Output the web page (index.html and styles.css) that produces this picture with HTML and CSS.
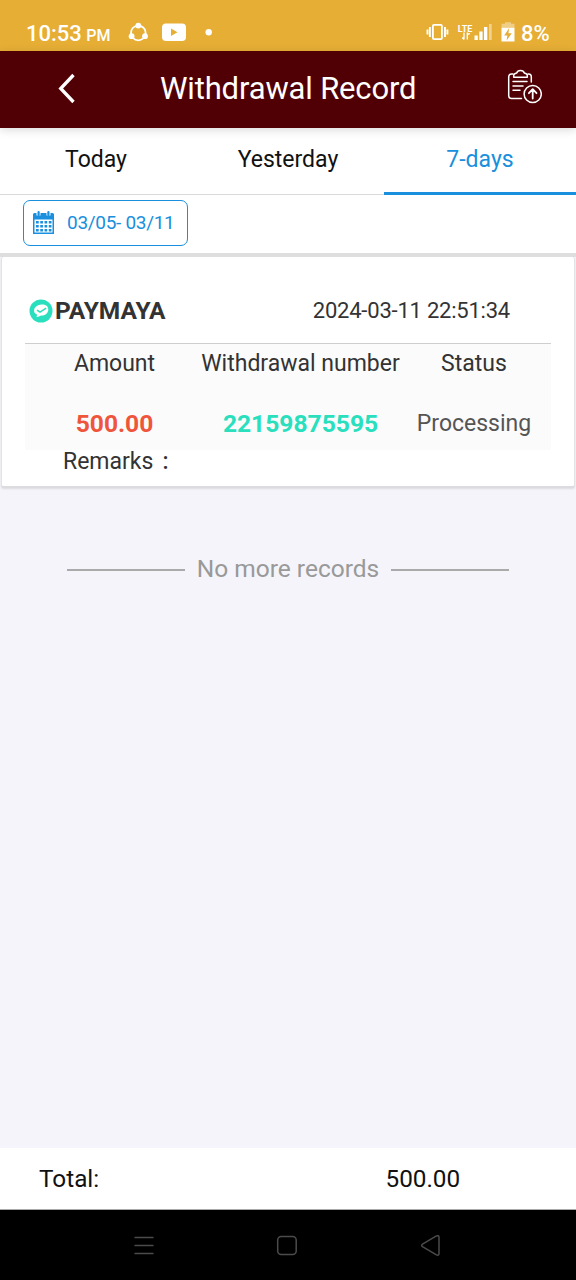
FILE: index.html
```html
<!DOCTYPE html>
<html lang="en">
<head>
<meta charset="utf-8">
<title>Withdrawal Record</title>
<link rel="stylesheet" href="styles.css">
</head>
<body>
<div class="screen">
  <div class="status">
    <span class="clock">10:53 <small>PM</small></span>
    <svg class="status-left" width="90" height="24" viewBox="128 21 90 24" fill="#fff">
      <circle cx="138.3" cy="33" r="7.3" fill="none" stroke="#fff" stroke-width="1.8" stroke-dasharray="11.3 4" stroke-dashoffset="-6"/>
      <circle cx="138.3" cy="25.6" r="2.9"/><circle cx="131.6" cy="36.2" r="2.9"/><circle cx="145" cy="36.2" r="2.9"/>
      <rect x="162" y="23.5" width="24" height="17.5" rx="4"/>
      <path d="M171 28.5v7.500l6.500-3.750z" fill="#e6ae35"/>
      <circle cx="208.700" cy="32.300" r="3.200"/>
    </svg>
    <svg class="status-right" width="92" height="26" viewBox="425 20 92 26" fill="#fff">
      <rect x="432.900" y="24.900" width="9" height="14.200" rx="1" fill="none" stroke="#fff" stroke-width="1.800"/>
      <path d="M429.900 27v10M427.500 29.500v5M445 27v10M447.400 29.500v5" fill="none" stroke="#fff" stroke-width="1.900"/>
      <text class="lte" x="457.800" y="31.500">LTE</text>
      <path d="M464 32.500v7m-1.700-2l1.700 2M467.300 39.500v-7m0 2.500q1-1.500 2.500-1.200" fill="none" stroke="#fff" stroke-width="1.300"/>
      <path d="M474.500 35.500h3.300v4.500h-3.300zM479.300 31.500h3.300v8.500h-3.300zM484 27h3.300v13H484z"/>
      <path d="M489 24h2.700v16H489z" opacity=".45"/>
      <path d="M501.500 27.500h13V41.500h-13z"/><path d="M501.500 27v-3.200h3.500v-1.500h6v1.500h3.500V27z" opacity=".4"/>
      <path d="M509.200 28l-5 7.500h3.200l-.8 5 5.200-7.200h-3.400z" fill="#e6ae35"/>
    </svg>
    <span class="battery">8%</span>
  </div>
  <header class="header">
    <svg class="back" width="24" height="34" viewBox="0 0 24 34" fill="none" stroke="#fff" stroke-width="3.300"><path d="M18.500 4L5.700 17.500 18.500 31"/></svg>
    <h1>Withdrawal Record</h1>
    <svg class="report" width="36" height="36" viewBox="506 69 36 36" fill="none" stroke="#fff" stroke-width="1.500" stroke-linecap="round" stroke-linejoin="round">
      <path d="M513 74h-1.500q-2.800 0-2.800 2.800v19q0 2.700 2.800 2.700h10M528 74h.700q2.600 0 2.600 2.800V82"/>
      <path d="M513.700 77.200v-2q0-1.500 3-2.200.700-2.500 3.800-2.500t3.800 2.500q3 .7 3 2.200v2zM513 81.500h14M513 86h10M513 90.300h7"/>
      <circle cx="532.700" cy="94" r="8.600"/><path d="M532.700 98.500v-9M528.900 93.200l3.800-4 3.800 4" stroke-width="1.800"/>
    </svg>
  </header>
  <nav class="tabs"><span>Today</span><span>Yesterday</span><span class="active">7-days</span></nav>
  <div class="filter">
    <button class="date">
      <svg width="22" height="24" viewBox="0 0 22 24" fill="#198fdd">
        <path fill-rule="evenodd" d="M1.500 2h2v2.500h4V2h6v2.500h4V2h2Q21 2 21 3.500V23H0V3.500Q0 2 1.500 2zM1.500 8.500v13h18v-13z"/>
        <rect x="4.500" y="0" width="2.200" height="5" rx="1"/><rect x="14.300" y="0" width="2.200" height="5" rx="1"/>
        <path d="M3 11.300h15.500M3 15.300h15.500M3 19.300h15.500" fill="none" stroke="#198fdd" stroke-width="2.500" stroke-dasharray="2.700 1.560"/>
      </svg>
      <span>03/05- 03/11</span>
    </button>
  </div>
  <main class="content">
    <article class="card">
      <div class="card-head">
        <svg width="24" height="24" viewBox="0 0 24 24"><circle cx="12" cy="12" r="11.500" fill="#29dfbd"/><path d="M12.500 5.500c4.300-.5 7.200 2 6.800 5.600-.4 3.500-3.200 5.500-6.800 5.500-1.300 0-2.500 1.200-5 1.500l.6-2.400C5.800 14.600 4.800 13 5.100 11c.5-3.200 3.600-5.200 7.400-5.500z" fill="#fff"/><path d="M8 11.200l3 2 6.200-4" fill="none" stroke="#29dfbd" stroke-width="1.500"/></svg>
        <strong>PAYMAYA</strong>
        <time>2024-03-11 22:51:34</time>
      </div>
      <div class="grid">
        <span>Amount</span><span>Withdrawal number</span><span>Status</span>
        <b class="amount">500.00</b><b class="number">22159875595</b><span class="state">Processing</span>
      </div>
      <div class="remarks">Remarks<span class="colon">:</span></div>
    </article>
    <div class="end"><i></i><span>No more records</span><i></i></div>
  </main>
  <footer class="total"><span>Total:</span><span class="sum">500.00</span></footer>
  <div class="system">
    <svg width="20" height="22" viewBox="0 0 20 22"><path d="M.5 2.500h19M.5 10.500h19M.5 18.500h19"/></svg>
    <svg width="22" height="22" viewBox="0 0 22 22"><rect x="1.700" y="1.500" width="18.500" height="18" rx="3.500"/></svg>
    <svg width="22" height="22" viewBox="0 0 22 22"><path d="M2.500 9.200L16 1.200q3-1.500 3 1.300v16q0 2.700-3 1.200l-13.500-8q-1.700-1.200 0-2.500z"/></svg>
  </div>
</div>
</body>
</html>
```
FILE: styles.css
```css
* { box-sizing: border-box; }
body { margin: 0; font-family: Roboto, "Liberation Sans", sans-serif; color: #111; background: #f4f4fa; }
svg { display: block; flex: none; }
.screen { width: 576px; height: 1280px; display: flex; flex-direction: column; overflow: hidden; }
.status { height: 51px; flex: none; background: #e6ae35; color: #fff; display: flex; align-items: flex-start; padding: 20px 0 0 26px; white-space: nowrap; }
.clock { width: 102px; font-size: 22px; line-height: 27px; font-weight: 500; }
.clock small { font-size: 16px; margin-left: -1px; }
.status-left { margin-top: 1px; }
.status-right { margin-left: 207px; }
.lte { font: 700 9px Roboto, sans-serif; }
.battery { font-size: 22px; line-height: 27px; font-weight: 500; margin-left: 4px; }
.header { height: 77px; flex: none; background: #500005; color: #fff; display: grid; grid-template-columns: 160px 256px 160px; align-items: center; box-shadow: 0 2px 9px rgba(0,0,0,.15); z-index: 1; }
.header h1 { margin: 0; padding-bottom: 1px; font-size: 31px; letter-spacing: -.16px; font-weight: 400; line-height: 36px; text-align: center; white-space: nowrap; }
.back { margin: -3px 0 0 55px; }
.report { margin: -6px 0 0 90px; }
.tabs { height: 67px; flex: none; background: #fff; display: grid; grid-template-columns: repeat(3, 1fr); text-align: center; font-size: 23px; line-height: 64px; }
.tabs span { height: 67px; border-bottom: 1px solid #d9d9d9; }
.tabs .active { color: #198fdd; border-bottom: 3px solid #198fdd; }
.filter { height: 58px; flex: none; background: #fff; padding: 5px 23px; }
.date { width: 165px; height: 46px; border: 1.500px solid #198fdd; border-radius: 7px; background: #fff; color: #198fdd; display: flex; align-items: center; gap: 12px; padding: 0 0 0 9px; font: 19px/24px Roboto, sans-serif; letter-spacing: -.3px; white-space: nowrap; }
.content { flex: 1; border-top: 4px solid #dedede; }
.card { height: 231px; margin: 0 1px; padding: 0 23px; background: #fff; border: 1px solid #e2e2e4; border-top: 0; border-bottom: 2px solid #dcdce0; border-radius: 3px; color: #333; box-shadow: 0 1px 2px #ddd; font-size: 23px; }
.card-head { height: 87px; padding: 21px 0 0 4px; display: flex; align-items: center; border-bottom: 1px solid #cecece; }
.card-head strong { margin-left: 2px; font-size: 24.500px; font-weight: 700; }
.card-head time { margin-left: auto; padding-right: 41px; font-size: 22px; letter-spacing: -.22px; }
.grid { height: 106px; background: #fbfbfb; display: grid; grid-template-columns: 175px 201px 150px; grid-template-rows: 39px 67px; text-align: center; line-height: 39px; white-space: nowrap; }
.grid > :nth-child(3n+1) { padding-left: 4px; }
.grid > :nth-child(3n) { padding-right: 4px; }
.grid b, .state { line-height: 81px; }
.grid b { font-size: 24.600px; }
.amount { color: #ef553b; }
.number { color: #29dfbd; }
.state { color: #555; }
.remarks { padding-left: 38px; line-height: 24px; }
.colon { margin-left: 9px; font-weight: 500; }
.end { margin-top: 65px; height: 30px; display: flex; align-items: center; justify-content: center; gap: 12px; color: #999; font-size: 24.500px; white-space: nowrap; }
.end i { width: 118px; height: 2px; margin-top: 3px; background: #aaa; }
.total { height: 62px; flex: none; background: #fff; display: grid; grid-template-columns: 346.500px 1fr; padding-left: 39px; font-size: 24.300px; line-height: 62px; border-bottom: 1px solid #aaa; }
.system { height: 70px; flex: none; background: #000; display: flex; justify-content: space-between; align-items: center; padding: 1px 134px 0; }
.system svg { fill: none; stroke: #4b4b4b; stroke-width: 1.500; }
```
